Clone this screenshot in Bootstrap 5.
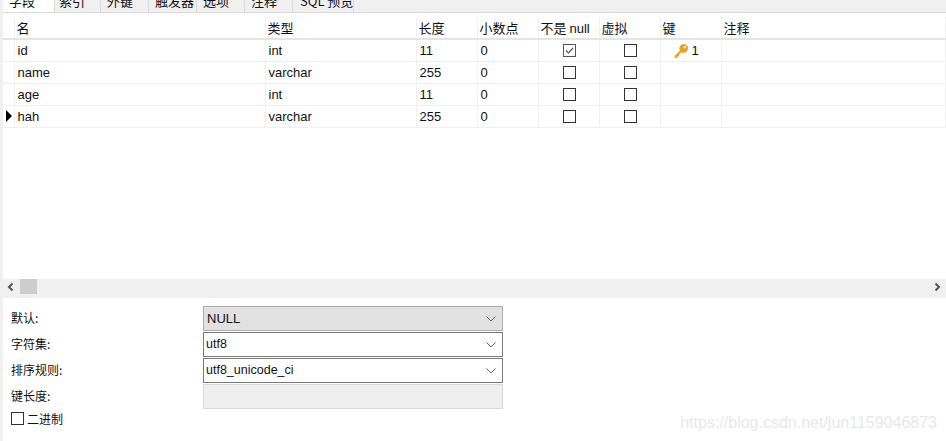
<!DOCTYPE html>
<html lang="zh">
<head>
<meta charset="utf-8">
<link href="https://cdn.jsdelivr.net/npm/bootstrap@5.3.0/dist/css/bootstrap.min.css" rel="stylesheet">
<style>
html,body{height:441px;overflow:hidden}
body{background:#fff;color:#111;font:13px/1 "Noto Sans CJK SC","Liberation Sans",sans-serif;}
.app{height:441px;border-left:3px solid #f0f0f0;position:relative}
.tabstrip{height:13px;background:#f0f0f0;border-bottom:1px solid #d9d9d9;overflow:hidden;flex-wrap:nowrap}
.tabitem{width:48px;border-right:1px solid #d9d9d9;background:#f0f0f0;font-size:13px;line-height:14px;margin-top:-6px;padding-left:6px;white-space:nowrap;flex:none;height:18px}
.tabitem.on{background:#fff;width:52px;height:19px;padding-left:6px}
.tabitem.narrow{width:46px;padding-left:4px}
.tabitem.wide{width:61px;padding-left:7px}
.gridwrap{height:266px;padding-top:4px}
.datagrid{table-layout:fixed;border-collapse:collapse;width:943px}
.datagrid th,.datagrid td{border-right:1px solid #f0f0f0;border-bottom:1px solid #f0f0f0;padding:0 0 0 2px;height:22px;font-weight:400;font-size:12.5px;white-space:nowrap;overflow:hidden;vertical-align:middle}
.datagrid th{height:22px;border-bottom:2px solid #e4e4e4;font-size:13px}
.datagrid .marker{padding:0}
.datagrid .mid{padding:0 0 0 2px;text-align:center}
.datagrid .latin{font-family:"Liberation Sans","Noto Sans CJK SC",sans-serif;font-size:13px;padding-left:3px}
.latinbit{font-family:"Liberation Sans",sans-serif}
.tick{display:block;margin:0 auto}
.rowmark{display:block;margin-left:3px}
.datagrid .keycell{padding-left:13px}
.keygap{gap:3px}
.scrollband{height:19px;background:#f0f0f0}
.scrollthumb{width:17px;height:15px;background:#cdcdcd}
.arrowbtn{width:17px;padding-top:3px}
.formarea{padding:8px 0 0 8px;font-size:12px}
.formline{height:26px}
.formlabel{width:192px;line-height:24px;font-size:12px}
.combo{width:300px;height:25px;border:1px solid #7a7a7a;padding:0 6px 0 2px;font-size:12.5px;background:#fff;font-family:"Liberation Sans",sans-serif}
.combo.off{background:#e1e1e1;border-color:#adadad;padding-left:3px;font-size:13px}
.combo.blank{background:#efefef;border-color:#d9d9d9}
.box{width:13px;height:13px;border:1px solid #333;flex:none;background:#fff}
.binline{margin-top:2px;gap:3px;font-size:12px;line-height:13px}
.watermark{position:absolute;right:9px;bottom:10px;color:#e8e8e8;font:16px/1 "Liberation Sans",sans-serif}
</style>
</head>
<body>
<div class="app">
  <div class="tabstrip d-flex">
    <div class="tabitem on">字段</div>
    <div class="tabitem narrow">索引</div>
    <div class="tabitem">外键</div>
    <div class="tabitem">触发器</div>
    <div class="tabitem">选项</div>
    <div class="tabitem">注释</div>
    <div class="tabitem wide">SQL 预览</div>
  </div>
  <div class="gridwrap">
    <table class="datagrid">
      <colgroup><col style="width:11px"><col style="width:251px"><col style="width:151px"><col style="width:61px"><col style="width:61px"><col style="width:61px"><col style="width:61px"><col style="width:61px"><col></colgroup>
      <thead><tr><th class="marker"></th><th>名</th><th>类型</th><th>长度</th><th>小数点</th><th>不是 <span class="latinbit">null</span></th><th>虚拟</th><th>键</th><th>注释</th></tr></thead>
      <tbody>
        <tr><td class="marker"></td><td class="latin">id</td><td class="latin">int</td><td class="latin">11</td><td class="latin">0</td>
          <td class="mid"><svg class="tick" width="13" height="13" viewBox="0 0 13 13"><rect x=".5" y=".5" width="12" height="12" fill="#fff" stroke="#555"/><path d="M3 6.500 5.500 9 10 4" fill="none" stroke="#555" stroke-width="1.2"/></svg></td>
          <td class="mid"><svg class="tick" width="13" height="13" viewBox="0 0 13 13"><rect x=".5" y=".5" width="12" height="12" fill="#fff" stroke="#333"/></svg></td>
          <td class="latin keycell"><span class="d-flex align-items-center keygap"><svg width="15" height="15" viewBox="0 0 15 15"><path d="M9.600 1a4.400 4.400 0 1 1-2.200 8.200L5 11.600V13.200L3.600 13.300 3.400 14.800 1 15 .6 13 6 7.600A4.400 4.400 0 0 1 9.600 1Z" fill="#e8a11f"/><circle cx="10.800" cy="4.200" r="1.200" fill="#fff3cf"/></svg>1</span></td><td></td></tr>
        <tr><td class="marker"></td><td class="latin">name</td><td class="latin">varchar</td><td class="latin">255</td><td class="latin">0</td>
          <td class="mid"><svg class="tick" width="13" height="13" viewBox="0 0 13 13"><rect x=".5" y=".5" width="12" height="12" fill="#fff" stroke="#333"/></svg></td>
          <td class="mid"><svg class="tick" width="13" height="13" viewBox="0 0 13 13"><rect x=".5" y=".5" width="12" height="12" fill="#fff" stroke="#333"/></svg></td><td></td><td></td></tr>
        <tr><td class="marker"></td><td class="latin">age</td><td class="latin">int</td><td class="latin">11</td><td class="latin">0</td>
          <td class="mid"><svg class="tick" width="13" height="13" viewBox="0 0 13 13"><rect x=".5" y=".5" width="12" height="12" fill="#fff" stroke="#333"/></svg></td>
          <td class="mid"><svg class="tick" width="13" height="13" viewBox="0 0 13 13"><rect x=".5" y=".5" width="12" height="12" fill="#fff" stroke="#333"/></svg></td><td></td><td></td></tr>
        <tr><td class="marker"><svg class="rowmark" width="6" height="12" viewBox="0 0 6 12"><path d="M0 0 6 6 0 12Z" fill="#000"/></svg></td><td class="latin">hah</td><td class="latin">varchar</td><td class="latin">255</td><td class="latin">0</td>
          <td class="mid"><svg class="tick" width="13" height="13" viewBox="0 0 13 13"><rect x=".5" y=".5" width="12" height="12" fill="#fff" stroke="#333"/></svg></td>
          <td class="mid"><svg class="tick" width="13" height="13" viewBox="0 0 13 13"><rect x=".5" y=".5" width="12" height="12" fill="#fff" stroke="#333"/></svg></td><td></td><td></td></tr>
      </tbody>
    </table>
  </div>
  <div class="scrollband d-flex">
    <div class="arrowbtn"><svg width="8" height="10" viewBox="0 0 8 10" class="d-block ms-1"><path d="M5.500 1.500 2 5l3.500 3.500" fill="none" stroke="#555" stroke-width="2"/></svg></div>
    <div class="scrollthumb"></div>
    <div class="flex-grow-1"></div>
    <div class="arrowbtn"><svg width="8" height="10" viewBox="0 0 8 10" class="d-block ms-1"><path d="M2.500 1.500 6 5 2.500 8.500" fill="none" stroke="#555" stroke-width="2"/></svg></div>
  </div>
  <div class="formarea">
    <div class="formline d-flex"><div class="formlabel">默认:</div><div class="combo off d-flex align-items-center justify-content-between"><span>NULL</span><svg width="10" height="6" viewBox="0 0 10 6"><path d="M.5.500 5 5 9.500.500" fill="none" stroke="#666"/></svg></div></div>
    <div class="formline d-flex"><div class="formlabel">字符集:</div><div class="combo d-flex align-items-center justify-content-between"><span>utf8</span><svg width="10" height="6" viewBox="0 0 10 6"><path d="M.5.500 5 5 9.500.500" fill="none" stroke="#666"/></svg></div></div>
    <div class="formline d-flex"><div class="formlabel">排序规则:</div><div class="combo d-flex align-items-center justify-content-between"><span>utf8_unicode_ci</span><svg width="10" height="6" viewBox="0 0 10 6"><path d="M.5.500 5 5 9.500.500" fill="none" stroke="#666"/></svg></div></div>
    <div class="formline d-flex"><div class="formlabel">键长度:</div><div class="combo blank"></div></div>
    <div class="binline d-flex align-items-center"><span class="box"></span><span>二进制</span></div>
  </div>
  <div class="watermark">https://blog.csdn.net/jun1159046873</div>
</div>
<script src="https://cdn.jsdelivr.net/npm/bootstrap@5.3.0/dist/js/bootstrap.bundle.min.js"></script>
</body>
</html>
